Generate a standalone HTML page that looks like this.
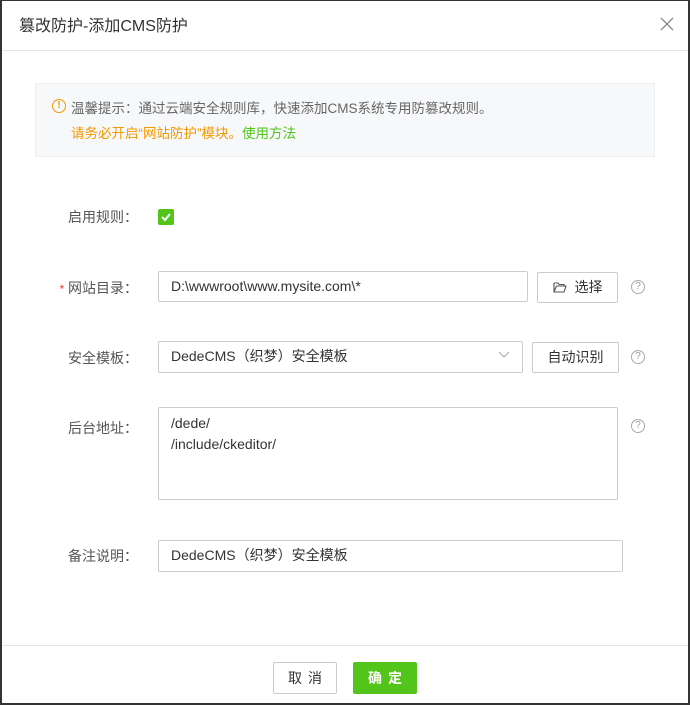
<!DOCTYPE html>
<html><head><meta charset="utf-8"><style>
*{box-sizing:border-box;margin:0;padding:0}
body{width:690px;height:705px;background:#fff;font-family:"Liberation Sans","Noto Sans CJK SC",sans-serif;font-size:14px;color:#333;position:relative;overflow:hidden}
.frame{position:absolute;left:0;top:0;width:690px;height:705px;border:1px solid #333;border-width:1px 2px 2px 2px}
.abs{position:absolute}
.hd{left:2px;top:0;width:686px;height:51px;border-bottom:1px solid #e5e5e5}
.title{left:19px;top:12px;font-size:16px;color:#333}
.tip{left:35px;top:83px;width:620px;height:74px;background:#f7f8fa;border:1px solid #ebedf0}
.lbl{width:92px;text-align:right;left:46px;color:#555}
.inp{border:1px solid #ccc;border-radius:2px;background:#fff;padding-left:12px;color:#333;line-height:29px}
.btn{border:1px solid #ccc;border-radius:2px;background:#fff;text-align:center;line-height:29px;color:#333}
.q{width:14px;height:14px;border:1px solid #aaa;border-radius:50%;font-size:10px;color:#999;text-align:center;line-height:12px}
</style></head><body>
<div class="frame"></div>
<div class="abs hd"></div>
<div class="abs title">篡改防护-添加CMS防护</div>
<svg class="abs" style="left:660px;top:17px" width="14" height="14"><path d="M1 1L13 13M13 1L1 13" stroke="#888" stroke-width="1.3"/></svg>
<div class="abs tip"></div>
<div class="abs" style="left:52px;top:99px;width:14px;height:14px;border:1.3px solid #f39800;border-radius:50%;color:#f39800;font-size:10px;text-align:center;line-height:11px;font-weight:bold">!</div>
<div class="abs" style="left:71px;top:97px;color:#666;font-size:13.5px">温馨提示：通过云端安全规则库，快速添加CMS系统专用防篡改规则。</div>
<div class="abs" style="left:71px;top:122px;color:#f39800;font-size:13.5px">请务必开启“网站防护”模块。<span style="color:#52c41a">使用方法</span></div>

<div class="abs lbl" style="top:207px">启用规则：</div>
<div class="abs" style="left:158px;top:209px;width:16px;height:16px;background:#52c41a;border-radius:2px"><svg width="16" height="16"><path d="M4 8L7 11L12 5" stroke="#fff" stroke-width="2" fill="none"/></svg></div>

<div class="abs lbl" style="top:278px"><span style="color:#e33;font-size:12px">*</span> 网站目录：</div>
<div class="abs inp" style="left:158px;top:271px;width:370px;height:31px">D:\wwwroot\www.mysite.com\*</div>
<div class="abs btn" style="left:537px;top:272px;width:81px;height:31px"><svg width="14" height="12" style="vertical-align:-1px;margin-right:8px"><path d="M1 2H5L6 3.5H11V5M1 2V11H11L13 5H3.5L1 11" stroke="#555" fill="none" stroke-width="1.1"/></svg>选择</div>
<div class="abs q" style="left:631px;top:280px">?</div>

<div class="abs lbl" style="top:348px">安全模板：</div>
<div class="abs inp" style="left:158px;top:341px;width:365px;height:32px">DedeCMS（织梦）安全模板</div>
<svg class="abs" style="left:498px;top:351px" width="12" height="8"><path d="M1 1L6 6L11 1" stroke="#aaa" fill="none"/></svg>
<div class="abs btn" style="left:532px;top:342px;width:87px;height:31px">自动识别</div>
<div class="abs q" style="left:631px;top:350px">?</div>

<div class="abs lbl" style="top:418px">后台地址：</div>
<div class="abs inp" style="left:158px;top:407px;width:460px;height:93px;line-height:21px;padding-top:5px">/dede/<br>/include/ckeditor/</div>
<div class="abs q" style="left:631px;top:419px">?</div>

<div class="abs lbl" style="top:546px">备注说明：</div>
<div class="abs inp" style="left:158px;top:540px;width:465px;height:32px">DedeCMS（织梦）安全模板</div>

<div class="abs" style="left:2px;top:645px;width:686px;height:1px;background:#e5e5e5"></div>
<div class="abs btn" style="left:273px;top:662px;width:64px;height:32px;line-height:30px;letter-spacing:6px;padding-left:6px">取消</div>
<div class="abs" style="left:353px;top:662px;width:64px;height:32px;line-height:32px;background:#52c41a;color:#fff;text-align:center;border-radius:2px;letter-spacing:6px;padding-left:6px;font-weight:bold">确定</div>
</body></html>
